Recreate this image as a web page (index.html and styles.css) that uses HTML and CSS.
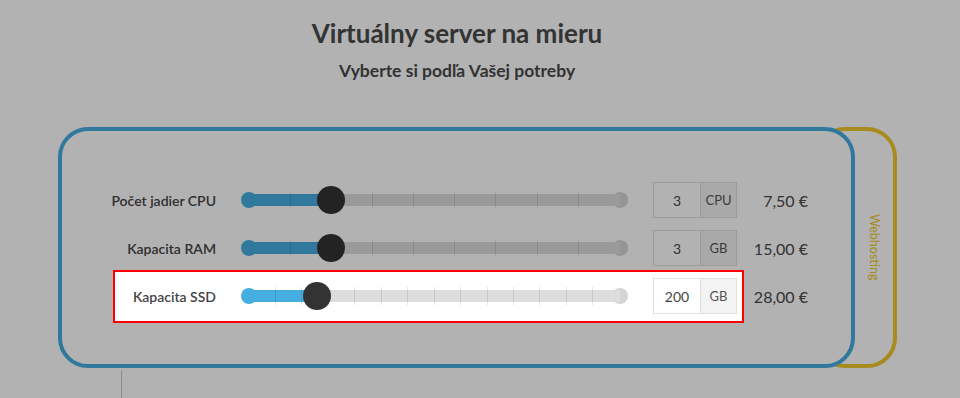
FILE: index.html
```html
<!DOCTYPE html>
<html lang="sk">
  <head>
    <meta charset="UTF-8" />
    <meta name="viewport" content="width=device-width, initial-scale=1.0" />
    <title>Virtuálny server na mieru</title>
    <link rel="stylesheet" href="styles.css">
  </head>
  <body>
    <div class="header">
      <h1 class="title">Virtuálny server na mieru</h1>
      <h2 class="subtitle">Vyberte si podľa Vašej potreby</h2>
    </div>

    <div class="plans">
      <div class="plan-main">
        <div class="row">
          <div class="row-main">
            <div class="label">Počet jadier CPU</div>
            <div class="slider">
              <div class="dot dot-start"></div>
              <div class="dot dot-end"></div>
              <div class="track">
                <div class="fill" style="width: 22.2%"></div>
                <div class="ticks">
                  <span></span><span></span><span></span><span></span><span></span>
                  <span></span><span></span><span></span><span></span><span></span>
                </div>
                <div class="handle" style="left: 22.2%"></div>
              </div>
            </div>
            <div class="amount">
              <div class="amount-value">3</div>
              <div class="amount-unit">CPU</div>
            </div>
          </div>
          <div class="price">7,50 €</div>
        </div>

        <div class="row">
          <div class="row-main">
            <div class="label">Kapacita RAM</div>
            <div class="slider">
              <div class="dot dot-start"></div>
              <div class="dot dot-end"></div>
              <div class="track">
                <div class="fill" style="width: 22.2%"></div>
                <div class="ticks">
                  <span></span><span></span><span></span><span></span><span></span>
                  <span></span><span></span><span></span><span></span><span></span>
                </div>
                <div class="handle" style="left: 22.2%"></div>
              </div>
            </div>
            <div class="amount">
              <div class="amount-value">3</div>
              <div class="amount-unit">GB</div>
            </div>
          </div>
          <div class="price">15,00 €</div>
        </div>

        <div class="row">
          <div class="row-main active">
            <div class="label">Kapacita SSD</div>
            <div class="slider">
              <div class="dot dot-start"></div>
              <div class="dot dot-end"></div>
              <div class="track">
                <div class="fill" style="width: 18.3%"></div>
                <div class="ticks">
                  <span></span><span></span><span></span><span></span><span></span>
                  <span></span><span></span><span></span><span></span><span></span>
                  <span></span><span></span><span></span><span></span><span></span>
                </div>
                <div class="handle" style="left: 18.3%"></div>
              </div>
            </div>
            <div class="amount">
              <div class="amount-value">200</div>
              <div class="amount-unit">GB</div>
            </div>
          </div>
          <div class="price">28,00 €</div>
        </div>
      </div>
      <div class="plan-tab">
        <span class="plan-tab-text">Webhosting</span>
      </div>
    </div>

    <div class="timeline"></div>

    <div class="overlay"></div>
  </body>
</html>
```

FILE: styles.css
```css
body {
  margin: 0;
  background: #fff;
  font-family: Lato, "Open Sans", sans-serif;
  color: #494949;
}
.header {
  padding-right: 46px;
  text-align: center;
}
.title {
  margin: 0;
  padding-top: 16px;
  font-size: 26px;
  line-height: 34px;
  font-weight: 700;
}
.subtitle {
  margin: 10px 0 0;
  font-size: 17.5px;
  line-height: 22px;
  font-weight: 700;
}
.plans {
  display: flex;
  margin: 45px 0 0 58px;
}
.plan-main {
  position: relative;
  width: 789px;
  padding: 45px 0 44px;
  border: 4px solid #45aee0;
  border-radius: 30px;
  background: #fff;
}
.plan-tab {
  display: flex;
  align-items: center;
  justify-content: center;
  width: 34px;
  margin-left: -40px;
  padding-left: 40px;
  border: 4px solid #f0c72c;
  border-radius: 30px;
}
.plan-tab-text {
  writing-mode: vertical-rl;
  font-size: 12.5px;
  color: #f0c72c;
  margin-left: -3px;
}
.row {
  display: flex;
  align-items: center;
  height: 48px;
  padding-left: 53px;
}
.row-main {
  display: flex;
  align-items: center;
  width: 627px;
  height: 48px;
  background: #fff;
}
.row-main.active {
  position: relative;
  z-index: 11;
  height: 49px;
  outline: 2px solid #f00;
}
.label {
  flex: none;
  width: 101px;
  white-space: nowrap;
  direction: rtl;
  text-align: right;
  font-size: 14px;
  font-weight: 600;
  color: #444;
}
.slider {
  position: relative;
  width: 387px;
  height: 28px;
  margin-left: 25px;
}
.track {
  position: absolute;
  left: 8px;
  right: 8px;
  top: 8px;
  height: 12px;
  background: #ddd;
}
.fill {
  height: 12px;
  background: #45aee0;
}
.ticks {
  position: absolute;
  left: 0;
  right: 0;
  top: -3px;
  height: 18px;
  display: flex;
  justify-content: space-between;
}
.ticks span {
  width: 1px;
  margin-left: -0.5px;
  background: rgba(0, 0, 0, 0.1);
}
.ticks span:first-child,
.ticks span:last-child {
  visibility: hidden;
}
.dot {
  position: absolute;
  top: 6px;
  width: 16px;
  height: 16px;
  border-radius: 50%;
  background: #d4d4d4;
}
.dot-start {
  left: 0;
  background: #45aee0;
}
.dot-end {
  right: 0;
}
.handle {
  position: absolute;
  top: -8px;
  width: 28px;
  height: 28px;
  margin-left: -14px;
  border-radius: 50%;
  background: #333;
}
.amount {
  display: flex;
  height: 36px;
  margin-left: 25px;
  font-size: 14px;
}
.amount-value {
  display: flex;
  align-items: center;
  justify-content: center;
  width: 46px;
  border: 1px solid #e0e0e0;
  color: #444;
}
.amount-unit {
  display: flex;
  align-items: center;
  justify-content: center;
  width: 35px;
  border: 1px solid #e0e0e0;
  border-left: none;
  background: #f3f3f3;
  font-size: 13px;
  color: #555;
}
.price {
  width: 66px;
  text-align: right;
  font-size: 16px;
  color: #494949;
}
.timeline {
  height: 40px;
  margin: 2px 0 0 121px;
  border-left: 1px solid #ccc;
}
.overlay {
  position: fixed;
  inset: 0;
  z-index: 10;
  background: rgba(0, 0, 0, 0.3);
}
```
